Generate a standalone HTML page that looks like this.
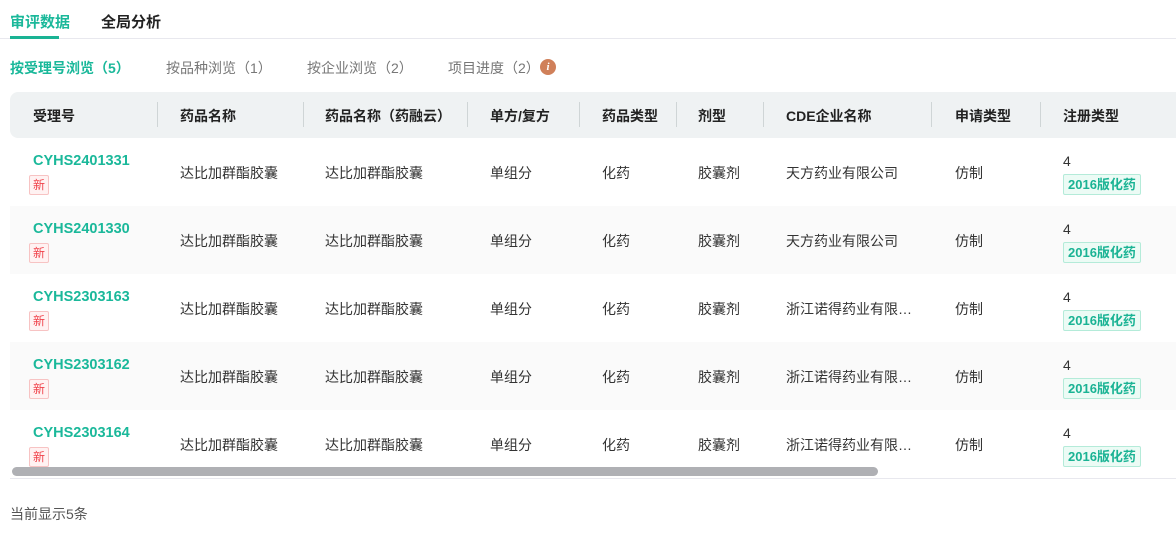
<!DOCTYPE html>
<html><head><meta charset="utf-8"><style>
body{margin:0;width:1176px;height:533px;overflow:hidden;background:#fff;font-family:"Liberation Sans","Noto Sans CJK SC",sans-serif;color:#333;font-size:14px;position:relative}
.a{position:absolute;white-space:nowrap}
.teal{color:#1ab89a}
.hdr{position:absolute;left:10px;top:92px;width:1180px;height:46px;background:#eff2f3;border-radius:8px}
.th{position:absolute;top:106px;font-weight:bold;color:#222;font-size:14px}
.sep{position:absolute;top:102px;width:1px;height:25px;background:#cfd5d6}
.row{position:absolute;left:10px;width:1166px;height:68px}
.new{position:absolute;left:29px;width:18px;height:18px;border:1px solid #f7c3c3;background:#fff2f2;color:#f0424a;font-size:12px;line-height:18px;text-align:center;border-radius:2px}
.tag{position:absolute;left:1063px;height:19px;padding:0 4px;border:1px solid #b4ebd9;background:#ecfbf5;color:#1ab394;font-weight:bold;font-size:13px;line-height:19px;border-radius:2px}
</style></head><body>
<div class="a teal" style="left:10px;top:11px;font-size:15px;font-weight:bold">审评数据</div>
<div class="a" style="left:101px;top:11px;font-size:15px;font-weight:bold;color:#222">全局分析</div>
<div class="a" style="left:0;top:38px;width:1176px;height:1px;background:#e8e8ee"></div>
<div class="a" style="left:10px;top:36px;width:49px;height:3px;background:#1ab394"></div>
<div class="a teal" style="left:10px;top:58px;font-weight:bold">按受理号浏览（5）</div>
<div class="a" style="left:166px;top:58px;color:#777">按品种浏览（1）</div>
<div class="a" style="left:307px;top:58px;color:#777">按企业浏览（2）</div>
<div class="a" style="left:448px;top:58px;color:#777">项目进度（2）</div>
<div class="a" style="left:540px;top:59px;width:16px;height:16px;border-radius:50%;background:#d0805a;color:#fff;font-size:11px;font-weight:bold;font-style:italic;text-align:center;line-height:16px;font-family:'Liberation Serif',serif">i</div>
<div class="hdr"></div>
<div class="th" style="left:33px">受理号</div>
<div class="th" style="left:180px">药品名称</div>
<div class="th" style="left:325px">药品名称（药融云）</div>
<div class="th" style="left:490px">单方/复方</div>
<div class="th" style="left:602px">药品类型</div>
<div class="th" style="left:698px">剂型</div>
<div class="th" style="left:786px">CDE企业名称</div>
<div class="th" style="left:955px">申请类型</div>
<div class="th" style="left:1063px">注册类型</div>
<div class="sep" style="left:157px"></div><div class="sep" style="left:303px"></div><div class="sep" style="left:467px"></div><div class="sep" style="left:579px"></div><div class="sep" style="left:676px"></div><div class="sep" style="left:763px"></div><div class="sep" style="left:931px"></div><div class="sep" style="left:1040px"></div>
<div class="row" style="top:206px;background:#fafafa"></div>
<div class="row" style="top:342px;background:#fafafa"></div>
<div class="a" style="left:10px;top:478px;width:1166px;height:1px;background:#e8e8ee"></div>
<div class="a" style="left:12px;top:467px;width:866px;height:9px;border-radius:5px;background:#afb0b4"></div>
<div class="a" style="left:10px;top:504px;color:#555">当前显示5条</div>
<div id="rows"></div>
<script>
var ids=["CYHS2401331","CYHS2401330","CYHS2303163","CYHS2303162","CYHS2303164"];
var co=["天方药业有限公司","天方药业有限公司","浙江诺得药业有限…","浙江诺得药业有限…","浙江诺得药业有限…"];
var h="";
for(var i=0;i<5;i++){var t=138+68*i;
h+='<div class="a teal" style="left:33px;top:'+(t+15)+'px;font-weight:bold;font-size:14.5px">'+ids[i]+'</div>';
h+='<div class="new" style="top:'+(t+37)+'px">新</div>';
var c=[[180,"达比加群酯胶囊"],[325,"达比加群酯胶囊"],[490,"单组分"],[602,"化药"],[698,"胶囊剂"],[786,co[i]],[955,"仿制"]];
for(var j=0;j<c.length;j++)h+='<div class="a" style="left:'+c[j][0]+'px;top:'+(t+25)+'px">'+c[j][1]+'</div>';
h+='<div class="a" style="left:1063px;top:'+(t+15)+'px">4</div>';
h+='<div class="tag" style="top:'+(t+36)+'px">2016版化药</div>';}
document.getElementById("rows").innerHTML=h;
</script>
</body></html>
